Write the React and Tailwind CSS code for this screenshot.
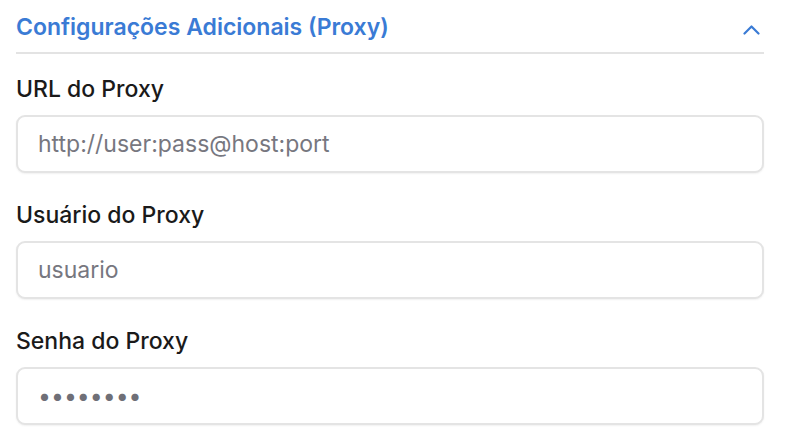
const fields = [
    { label: 'URL do Proxy', placeholder: 'http://user:pass@host:port', type: 'text' },
    { label: 'Usuário do Proxy', placeholder: 'usuario', type: 'text' },
    { label: 'Senha do Proxy', placeholder: '', type: 'password', value: '12345678' },
]

export default function App() {
    return (
        <div className="min-h-[440px] w-[790px] bg-white px-4 pt-[13px] font-['Inter',sans-serif]">
            <div className="mr-[10px] flex items-center justify-between border-b-2 border-[#e3e3e3] pb-[11px]">
                <h2 className="text-[23px] font-semibold leading-[28px] text-[#3a7bd5]">Configurações Adicionais (Proxy)</h2>
                <svg className="mr-[4px] mt-[6px]" width="17" height="10" viewBox="0 0 17 10" fill="none">
                    <path d="M1.5 8.5 L8.5 1.5 L15.5 8.5" stroke="#3a7bd5" strokeWidth="2.2" strokeLinecap="round" strokeLinejoin="round" />
                </svg>
            </div>
            <div className="mr-[10px] mt-[21px] flex flex-col gap-[28px]">
                {fields.map((field) => (
                    <div key={field.label} className="flex flex-col gap-3">
                        <label className="text-[23px] font-medium leading-[28px] text-[#1a1a1a]">{field.label}</label>
                        <input
                            type={field.type}
                            placeholder={field.placeholder}
                            defaultValue={field.value}
                            readOnly
                            className="h-[58px] rounded-[9px] border-2 border-[#e4e4e4] bg-white px-5 text-[23px] text-[#6f6f77] shadow-[0_1px_2px_rgba(0,0,0,0.06)] outline-none placeholder:text-[#77777f]"
                        />
                    </div>
                ))}
            </div>
        </div>
    )
}
